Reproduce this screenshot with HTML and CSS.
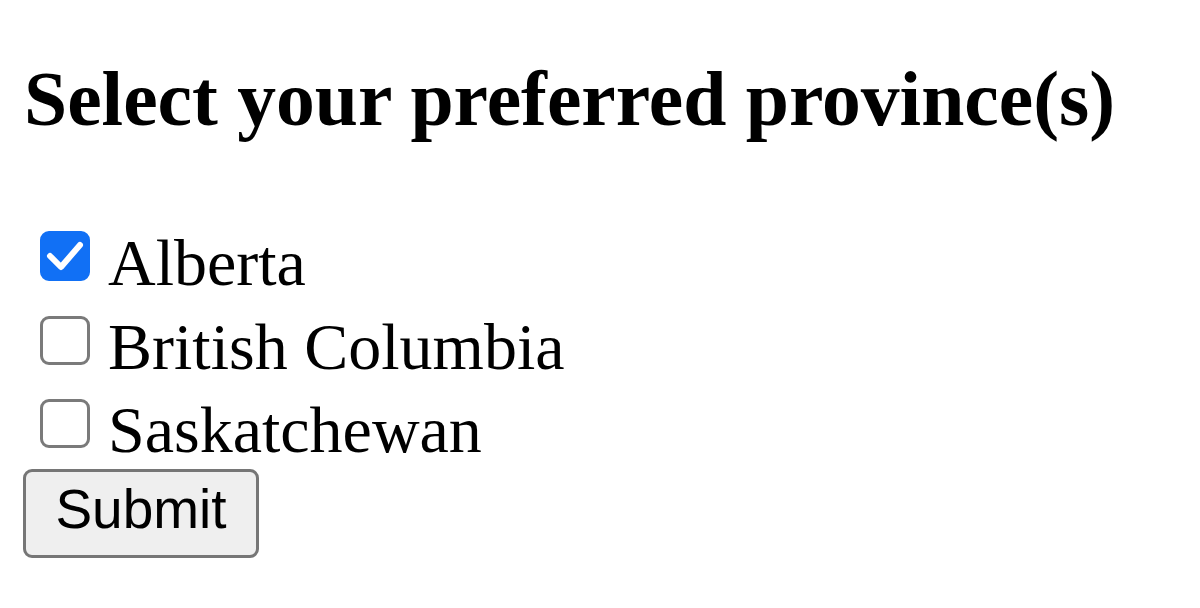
FILE: index.html
```html
<!DOCTYPE html>
<html lang="en">
<head>
<meta charset="utf-8">
<title>Select province</title>
<link rel="stylesheet" href="styles.css">
</head>
<body>
<form class="page">
  <h3 class="title">Select your preferred province(s)</h3>
  <div class="options">
    <label class="row">
      <span class="box checked"><svg viewBox="0 0 50 50" width="50" height="50"><path d="M10 25 L21 36 L40 14"/></svg></span>
      <span class="label">Alberta</span>
    </label>
    <label class="row">
      <span class="box"></span>
      <span class="label">British Columbia</span>
    </label>
    <label class="row">
      <span class="box"></span>
      <span class="label">Saskatchewan</span>
    </label>
  </div>
  <button type="button" class="submit">Submit</button>
</form>
</body>
</html>
```

FILE: styles.css
```css
html, body {
  margin: 0;
  padding: 0;
  background: #ffffff;
}

.page {
  display: flex;
  flex-direction: column;
  align-items: flex-start;
  padding: 55px 0 0 24px;
  margin: 0;
  font-family: "Liberation Serif", "Times New Roman", serif;
  color: #000000;
}

.title {
  margin: 0 0 81px 0;
  font-size: 77.6px;
  line-height: 88px;
  font-weight: bold;
  white-space: nowrap;
}

.options {
  display: flex;
  flex-direction: column;
  gap: 5.5px;
}

.row {
  display: flex;
  align-items: flex-start;
  height: 78px;
  line-height: 78px;
  font-size: 66px;
}

.box {
  box-sizing: border-box;
  width: 50px;
  height: 49px;
  margin: 8px 18px 0 16px;
  border: 3px solid #7a7a7a;
  border-radius: 9px;
  background: #ffffff;
  flex: none;
  position: relative;
}

.box.checked {
  background: #1170f5;
  border-color: #1170f5;
  height: 50px;
  margin-top: 7px;
}

.box svg {
  position: absolute;
  left: -3px;
  top: -3px;
  fill: none;
  stroke: #ffffff;
  stroke-width: 6;
  stroke-linecap: round;
  stroke-linejoin: round;
}

.label {
  white-space: nowrap;
}

.submit {
  box-sizing: border-box;
  width: 236px;
  height: 89px;
  margin: 0 0 0 -1px;
  padding: 0 0 9px 0;
  border: 3px solid #767676;
  border-radius: 9px;
  background: #efefef;
  font-family: "Liberation Sans", Arial, sans-serif;
  font-size: 55px;
  line-height: 61px;
  color: #000000;
  text-align: center;
}
```
